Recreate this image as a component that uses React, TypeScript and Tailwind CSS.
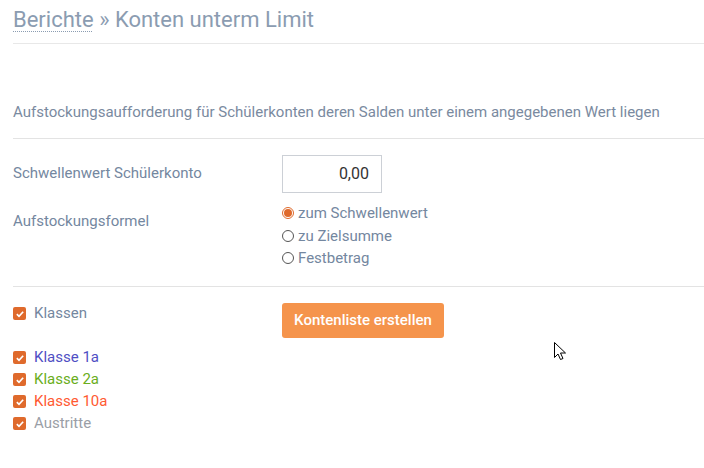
import { useState } from "react";

// ─── Data ─────────────────────────────────────────────────────────────────────

const formulas = ["zum Schwellenwert", "zu Zielsumme", "Festbetrag"];

const classes = [
  { name: "Klasse 1a", color: "text-[#4f4fc4]" },
  { name: "Klasse 2a", color: "text-[#6aae1c]" },
  { name: "Klasse 10a", color: "text-[#ff5a32]" },
  { name: "Austritte", color: "text-[#9a9ea6]" },
];

// ─── Small controls ───────────────────────────────────────────────────────────

function Check({ label, color }: { label: string; color: string }) {
  return (
    <label className="flex h-[22px] items-center gap-2">
      <span className="flex h-[13px] w-[13px] items-center justify-center rounded-[2px] bg-[#df6a2c]">
        <svg viewBox="0 0 12 12" className="h-[10px] w-[10px]">
          <path d="M2.2 6.2 4.8 8.7 9.8 3.3" fill="none" stroke="#fff" strokeWidth="2" />
        </svg>
      </span>
      <span className={`text-[15px] ${color}`}>{label}</span>
    </label>
  );
}

function Radio({ label, checked, onClick }: { label: string; checked: boolean; onClick: () => void }) {
  return (
    <label className="flex h-[22.5px] items-center gap-1" onClick={onClick}>
      <span
        className={`flex h-[12px] w-[12px] items-center justify-center rounded-full border ${
          checked ? "border-[#df6a2c]" : "border-[#555]"
        }`}
      >
        {checked && <span className="h-[8px] w-[8px] rounded-full bg-[#df6a2c]" />}
      </span>
      <span className="text-[15px] text-[#7487a0]">{label}</span>
    </label>
  );
}

// ─── Main ─────────────────────────────────────────────────────────────────────

export default function App() {
  const [formula, setFormula] = useState(0);

  return (
    <div className="relative h-[468px] w-[704px] overflow-hidden bg-white pl-[13px] font-['Roboto',sans-serif] text-[#7487a0]">
      {/* Breadcrumb */}
      <h1 className="border-b border-[#e8e8e8] pt-[6px] pb-[9px] text-[22px] leading-[28px] text-[#8b9cb1]">
        <span className="underline decoration-dotted decoration-1 underline-offset-[4px]">Berichte</span>
        {" » Konten unterm Limit"}
      </h1>

      {/* Description */}
      <p className="mt-[58px] border-b border-[#e3e3e3] pb-[16px] text-[15px] leading-[20px] text-[#7a8aa0]">
        Aufstockungsaufforderung für Schülerkonten deren Salden unter einem angegebenen Wert liegen
      </p>

      {/* Form */}
      <div className="grid grid-cols-[269px_1fr] border-b border-[#e3e3e3] pt-[16px] pb-[16px]">
        <div className="pt-[7px] text-[15px]">Schwellenwert Schülerkonto</div>
        <div className="flex h-[38px] w-[100px] items-center justify-end border border-[#ccd0d6] pr-[12px] text-[16px] text-[#333]">
          0,00
        </div>

        <div className="pt-[17px] text-[15px]">Aufstockungsformel</div>
        <div className="pt-[9px]">
          {formulas.map((f, i) => (
            <Radio key={f} label={f} checked={formula === i} onClick={() => setFormula(i)} />
          ))}
        </div>
      </div>

      {/* Classes */}
      <div className="grid grid-cols-[269px_1fr] pt-[16px]">
        <div>
          <Check label="Klassen" color="text-[#7487a0]" />
        </div>
        <div>
          <button className="h-[35px] w-[162px] rounded-[3px] bg-[#f5944c] text-[15px] font-medium text-white">
            Kontenliste erstellen
          </button>
        </div>
      </div>

      <div className="mt-[9px] flex flex-col">
        {classes.map((c) => (
          <Check key={c.name} label={c.name} color={c.color} />
        ))}
      </div>

      {/* Mouse cursor */}
      <svg viewBox="0 0 12 19" className="absolute left-[554px] top-[342px] h-[19px] w-[12px]">
        <path d="M0.5 0.5v15l3.5-3.5 2.5 5.5 2.5-1-2.5-5.5h5z" fill="#fff" stroke="#000" strokeWidth="1" />
      </svg>
    </div>
  );
}
